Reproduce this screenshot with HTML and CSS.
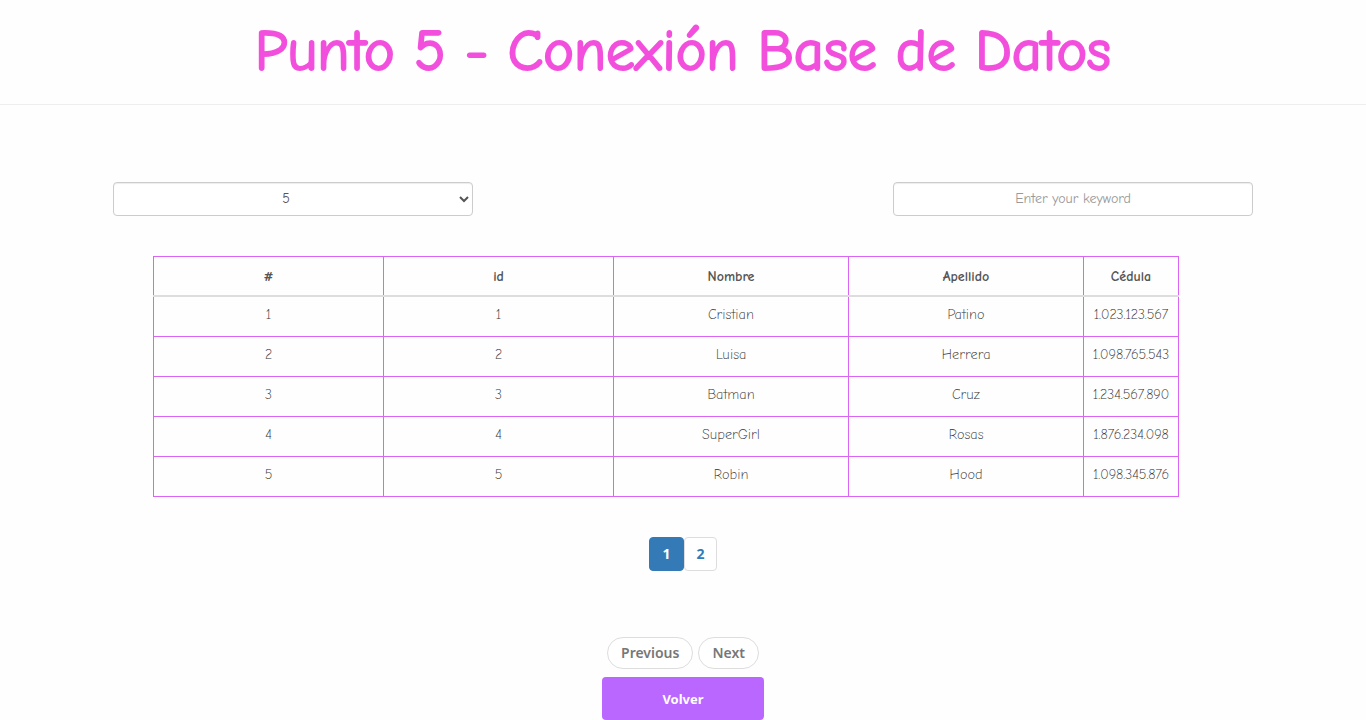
FILE: index.html
```html
<!DOCTYPE html>
<html lang="es">
<head>
<meta charset="utf-8">
<meta name="viewport" content="width=device-width, initial-scale=1">
<title>Punto 5 - Conexión Base de Datos</title>
<link rel="stylesheet" href="styles.css">
</head>
<body>
<header class="page-header">
  <h1 class="page-title">Punto 5 - Conexión Base de Datos</h1>
</header>
<main class="container">
  <div class="filters">
    <select class="form-control" aria-label="Registros por página">
      <option selected>5</option>
      <option>10</option>
      <option>15</option>
    </select>
    <input class="form-control" type="text" placeholder="Enter your keyword" aria-label="Buscar">
  </div>
  <table class="data-table">
    <colgroup>
      <col class="col-narrow"><col class="col-narrow"><col class="col-wide"><col class="col-wide"><col>
    </colgroup>
    <thead>
      <tr><th scope="col">#</th><th scope="col">id</th><th scope="col">Nombre</th><th scope="col">Apellido</th><th scope="col">Cédula</th></tr>
    </thead>
    <tbody>
      <tr><td>1</td><td>1</td><td>Cristian</td><td>Patino</td><td>1.023.123.567</td></tr>
      <tr><td>2</td><td>2</td><td>Luisa</td><td>Herrera</td><td>1.098.765.543</td></tr>
      <tr><td>3</td><td>3</td><td>Batman</td><td>Cruz</td><td>1.234.567.890</td></tr>
      <tr><td>4</td><td>4</td><td>SuperGirl</td><td>Rosas</td><td>1.876.234.098</td></tr>
      <tr><td>5</td><td>5</td><td>Robin</td><td>Hood</td><td>1.098.345.876</td></tr>
    </tbody>
  </table>
  <nav class="pagination" aria-label="Páginas">
    <a class="page-link page-link-active" href="#1" aria-current="page">1</a>
    <a class="page-link" href="#2">2</a>
  </nav>
  <nav class="pager" aria-label="Anterior y siguiente">
    <a class="pager-link" href="#previous">Previous</a>
    <a class="pager-link" href="#next">Next</a>
  </nav>
  <div class="actions">
    <button class="btn-back" type="button">Volver</button>
  </div>
</main>
</body>
</html>
```
FILE: styles.css
```css
* {
  box-sizing: border-box;
}

body {
  margin: 0;
  background: #fefefe;
  color: #333;
  font-family: "Comic Neue", Lato, sans-serif;
  font-size: 14px;
  line-height: 20px;
}

.page-header {
  padding: 18px 16px;
  border-bottom: 1px solid #eee;
  text-align: center;
}

.page-title {
  margin: 0;
  color: #f24fdd;
  font-size: 58px;
  font-weight: 400;
  line-height: 68px;
  -webkit-text-stroke: 2px #f24fdd;
}

.container {
  max-width: 1170px;
  margin: 0 auto;
  padding: 77px 15px 0;
}

.filters {
  display: flex;
  justify-content: space-between;
  gap: 30px;
}

.form-control {
  flex: 0 1 360px;
  min-width: 0;
  height: 34px;
  padding: 5px 12px 7px;
  border: 1px solid #ccc;
  border-radius: 4px;
  background-color: #fff;
  box-shadow: inset 0 1px 1px rgba(0, 0, 0, 0.075);
  color: #555;
  font-family: inherit;
  font-size: 14px;
  font-weight: 400;
  line-height: 20px;
  text-align: center;
}

select.form-control {
  padding: 5px 2px 7px 0;
}

.form-control::placeholder {
  color: #999;
}

.data-table {
  width: 90%;
  margin: 40px 40px 0;
  border-collapse: collapse;
  table-layout: fixed;
  text-align: center;
}

.col-narrow {
  width: 230px;
}

.col-wide {
  width: 235px;
}

.data-table th,
.data-table td {
  border: 1px solid #dc64f4;
}

.data-table th {
  padding: 10px 4px 8px;
  border-bottom: 2px solid #ddd;
  color: #555;
  font-weight: 700;
}

.data-table td {
  height: 40px;
  padding: 8px 4px 11px;
  font-weight: 300;
}

.pagination {
  display: flex;
  justify-content: center;
  margin-top: 40px;
  font-family: "Noto Sans", sans-serif;
  font-weight: 700;
}

.page-link {
  min-width: 33px;
  padding: 6px 8px;
  border: 1px solid #ddd;
  border-radius: 4px;
  background: #fff;
  color: #337ab7;
  text-align: center;
  text-decoration: none;
}

.page-link-active {
  min-width: 35px;
  border-color: #337ab7;
  background: #337ab7;
  color: #fff;
}

.pager {
  display: flex;
  justify-content: center;
  gap: 5px;
  margin-top: 66px;
  font-family: "Noto Sans", sans-serif;
  font-weight: 600;
}

.pager-link {
  padding: 5px 13px;
  border: 1px solid #ddd;
  border-radius: 16px;
  background: #fff;
  color: #777;
  text-decoration: none;
}

.actions {
  display: flex;
  justify-content: center;
  margin-top: 8px;
}

.btn-back {
  width: 162px;
  padding: 12px 16px 11px;
  border: 0;
  border-radius: 4px;
  background: #b967ff;
  color: #fff;
  font-family: "Noto Sans", sans-serif;
  font-size: 13px;
  font-weight: 700;
  line-height: 20px;
}
```
